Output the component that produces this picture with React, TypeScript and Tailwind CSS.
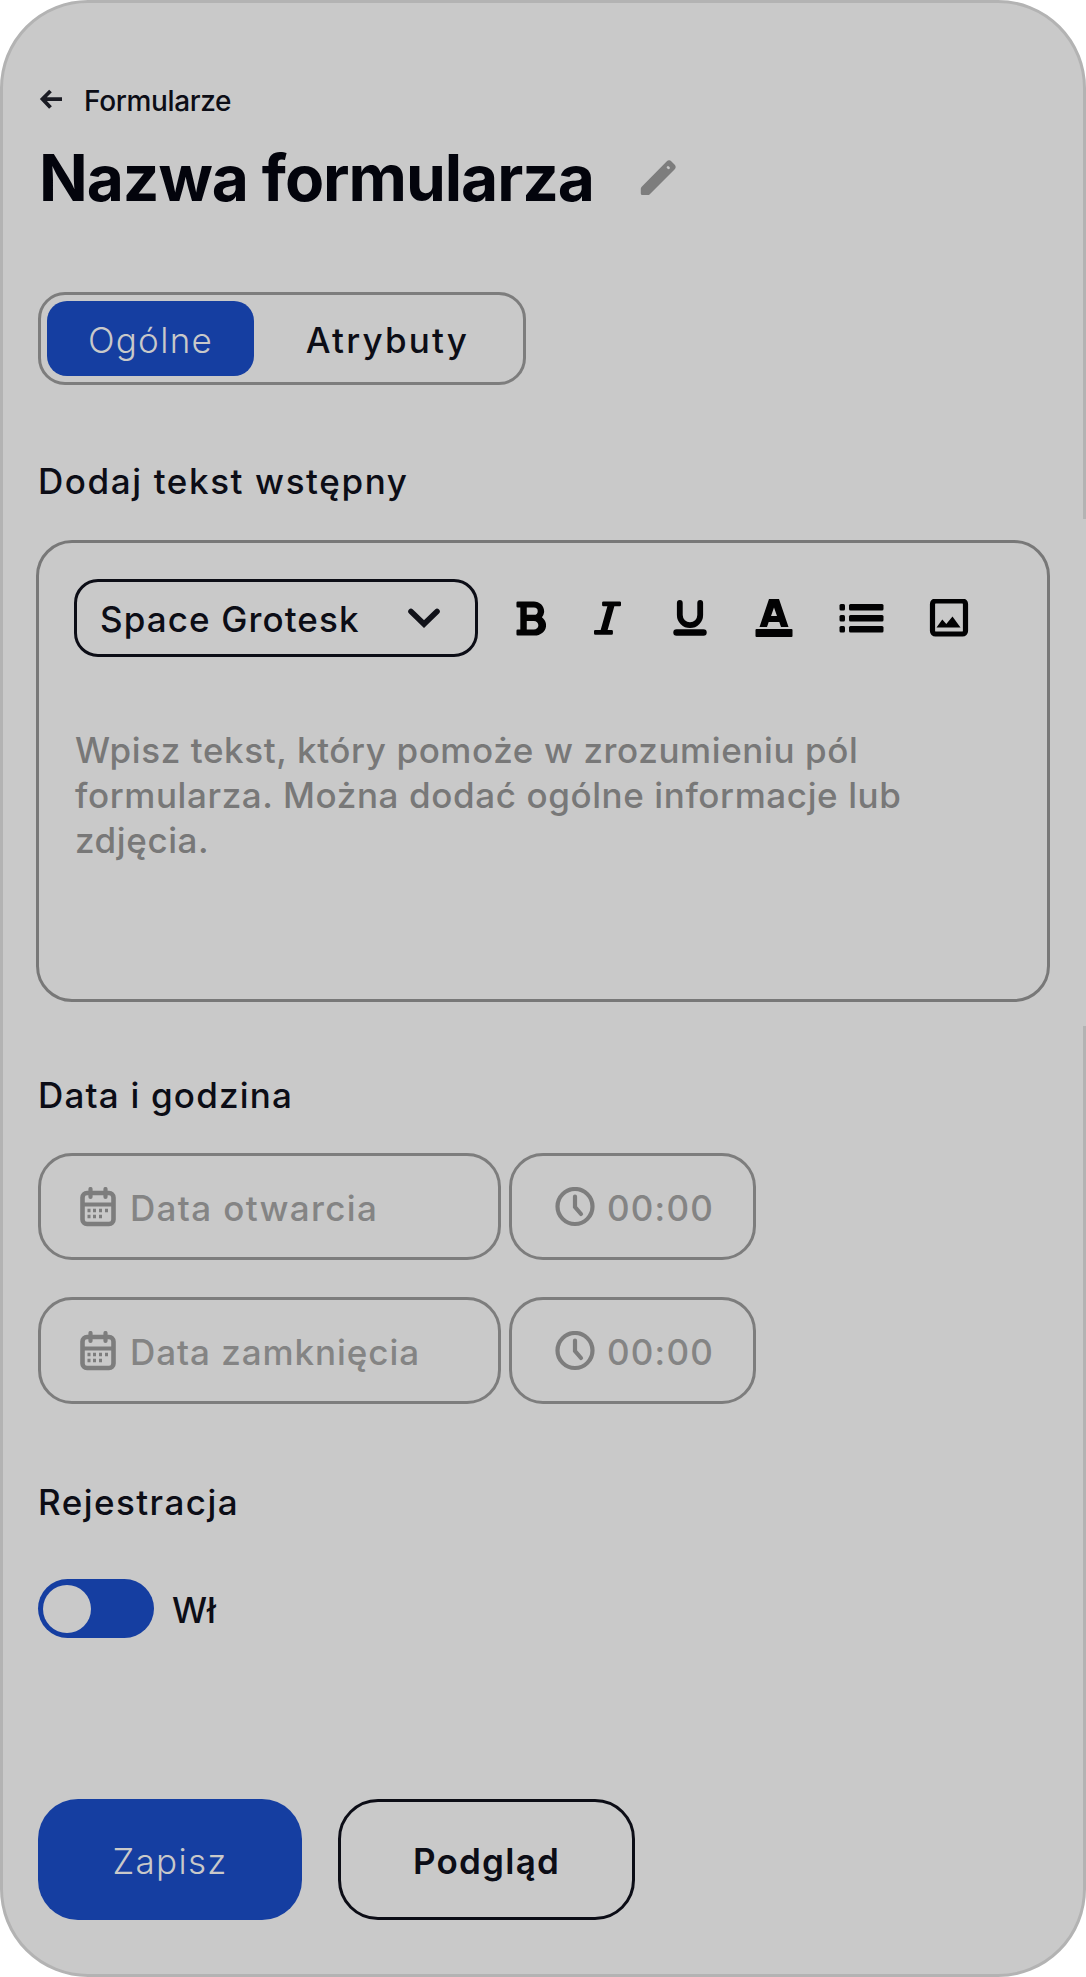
import { useState } from "react";
import type { ReactNode } from "react";
import { FaBold, FaItalic } from "react-icons/fa";

function ArrowLeft() {
  return (
    <svg className="h-[22px] w-[24px]" viewBox="0 0 24 22" fill="none" stroke="#1b1c24" strokeWidth="3.8">
      <path d="M12.500 2 4.500 10l8 8.500M4.500 10.200H24" />
    </svg>
  );
}

function Pencil() {
  return (
    <svg className="h-[38px] w-[38px]" viewBox="0 0 38 38">
      <path d="M27.6 2.4a3.500 3.500 0 0 1 4.900 0l3 3.100a3.500 3.500 0 0 1 0 4.900L10.800 35.200a3 3 0 0 1-2.100.9H3.400A1.600 1.600 0 0 1 1.800 34.500v-4.700a3 3 0 0 1 .9-2.100Z" fill="#7d7d7d" />
      <path d="m29 8.300.6.600" stroke="#c9c9c9" strokeWidth="2.600" strokeLinecap="round" />
    </svg>
  );
}

function ChevronDown() {
  return (
    <svg className="h-[20px] w-[34px]" viewBox="0 0 34 20" fill="none" stroke="#111219" strokeWidth="5.600" strokeLinecap="round">
      <path d="m4 3.500 13 12.500 13-12.500" />
    </svg>
  );
}

function Underline() {
  return (
    <svg className="h-[36px] w-[34px]" viewBox="0 0 34 36" fill="none" stroke="#020203" strokeLinecap="round">
      <path d="M6.800 3v12a10.200 10.200 0 0 0 20.400 0V3" strokeWidth="5.800" />
      <path d="M3.500 32.500h27" strokeWidth="6.400" />
    </svg>
  );
}

function TextColor() {
  return (
    <svg className="h-[40px] w-[38px]" viewBox="0 0 38 40">
      <path d="M14 1h10L33.500 29H26l-1.700-5H13.700L12 29H4.500Zm5 8.500-3 8.500h6Z" fill="#020203" fillRule="evenodd" />
      <rect x="0.500" y="31" width="37" height="8" rx="1" fill="#020203" />
    </svg>
  );
}

function BulletList() {
  return (
    <svg className="h-[30px] w-[45px]" viewBox="0 0 45 30" fill="#020203">
      {[1, 12, 23].map((y) => (
        <g key={y}>
          <rect x="0.500" y={y} width="5.500" height="6.500" rx="1.500" />
          <rect x="10" y={y} width="34.500" height="6.500" rx="1.500" />
        </g>
      ))}
    </svg>
  );
}

function Picture() {
  return (
    <svg className="h-[38px] w-[40px]" viewBox="0 0 40 38">
      <rect x="3.500" y="2" width="33" height="33" rx="3" fill="none" stroke="#020203" strokeWidth="5.200" />
      <path d="m7.500 28.500 5.800-8 4 4.500 6.200-7.500 8 11Z" fill="#020203" />
    </svg>
  );
}

function Calendar() {
  return (
    <svg className="h-[40px] w-[36px]" viewBox="0 0 36 40" fill="none" stroke="#7d7d7d">
      <rect x="2.500" y="6" width="31" height="31" rx="4.500" strokeWidth="4.600" />
      <path d="M2.500 17.500h31" strokeWidth="4" />
      <path d="M10.500 2v8M25.500 2v8" strokeWidth="4.200" strokeLinecap="round" />
      <path d="M7.500 23.500h3M13 23.500h3M19 23.500h3M25 23.500h3M7.500 29.500h3M13 29.500h3M19 29.500h3" strokeWidth="3.400" />
    </svg>
  );
}

function Clock() {
  return (
    <svg className="h-[40px] w-[40px]" viewBox="0 0 40 40" fill="none" stroke="#7d7d7d" strokeWidth="4.200">
      <circle cx="20" cy="19.500" r="17.500" />
      <path d="M20 9.500v10.500l6 7" strokeLinecap="round" />
    </svg>
  );
}

function Heading({ children, className }: { children: ReactNode; className: string }) {
  return <h2 className={"h-[44px] text-[35px] leading-[44px] font-medium whitespace-nowrap " + className}>{children}</h2>;
}

function DateRow({ label, labelClass }: { label: string; labelClass: string }) {
  return (
    <div className="flex h-[107px] gap-[8px] text-[35px] leading-[44px] font-medium text-[#848484]">
      <button className="flex w-[463px] items-center rounded-[34px] border-[3px] border-[#7d7d7d] pl-[39px]">
        <Calendar />
        <span className={"mt-[3px] ml-[14px] whitespace-nowrap " + labelClass}>{label}</span>
      </button>
      <button className="flex w-[247px] items-center rounded-[34px] border-[3px] border-[#7d7d7d] pl-[43px]">
        <Clock />
        <span className="mt-[3px] ml-[12px] tracking-[1.200px]">00:00</span>
      </button>
    </div>
  );
}

export default function App() {
  const [enabled, setEnabled] = useState(true);

  return (
    <main className="relative flex h-[1977px] w-[1086px] flex-col rounded-[88px] border-[3px] border-[#b3b3b3] bg-[#c9c9c9] pt-[79px] pl-[35px] font-['Inter',sans-serif] text-[#0c0d16]">
      <span className="absolute top-[516px] -right-[3px] h-[507px] w-[3px] bg-[#c9c9c9]" />

      <a className="flex h-[36px] items-center text-[28px] leading-[36px] font-medium">
        <ArrowLeft />
        <span className="mt-[2px] ml-[22px] tracking-[-0.350px]">Formularze</span>
      </a>

      <div className="mt-[24px] flex h-[72px] items-center">
        <h1 className="ml-[1px] w-[600px] text-[64px] leading-[72px] font-bold tracking-[-1.050px] whitespace-nowrap text-[#03040c]">Nazwa formularza</h1>
        <Pencil />
      </div>

      <div className="mt-[78px] flex h-[93px] w-[488px] rounded-[27px] border-[3px] border-[#7d7d7d] p-[6px] text-[35px]">
        <button className="h-[75px] w-[207px] rounded-[20px] bg-[#153ea1] pt-[3px] font-light tracking-[1.300px] text-[#c9c9c9]">Ogólne</button>
        <button className="flex-1 pt-[3px] pl-[4px] font-medium tracking-[2.200px]">Atrybuty</button>
      </div>

      <Heading className="mt-[74px] tracking-[1.600px]">Dodaj tekst wstępny</Heading>

      <section className="mt-[37px] -ml-[2px] h-[462px] w-[1014px] rounded-[36px] border-[3px] border-[#787878] pt-[36px] pl-[35px]">
        <div className="flex h-[78px] items-center text-[#020203]">
          <button className="flex h-[78px] w-[404px] items-center rounded-[24px] border-[3px] border-[#0c0d16] pl-[23px] text-[35px] font-medium text-[#0c0d16]">
            <span className="mt-[2px] w-[307px] text-left tracking-[1.100px]">Space Grotesk</span>
            <ChevronDown />
          </button>
          <FaBold className="ml-[37px] h-[39px] w-[31px]" preserveAspectRatio="none" />
          <FaItalic className="ml-[48px] h-[38px] w-[27px]" preserveAspectRatio="none" />
          <span className="ml-[52px]"><Underline /></span>
          <span className="ml-[48px]"><TextColor /></span>
          <span className="ml-[46px]"><BulletList /></span>
          <span className="ml-[45px]"><Picture /></span>
        </div>
        <p className="mt-[71px] w-[850px] pl-[1px] text-[35px] leading-[45px] font-[450] tracking-[0.600px] text-[#787878]">
          Wpisz tekst, który pomoże w zrozumieniu pól formularza. Można dodać ogólne informacje lub zdjęcia.
        </p>
      </section>

      <Heading className="mt-[71px] tracking-[1.200px]">Data i godzina</Heading>
      <div className="mt-[36px] flex flex-col gap-[37px]">
        <DateRow label="Data otwarcia" labelClass="tracking-[1.350px]" />
        <DateRow label="Data zamknięcia" labelClass="tracking-[0.950px]" />
      </div>

      <Heading className="mt-[76px] tracking-[1.450px]">Rejestracja</Heading>
      <div className="mt-[55px] flex h-[59px] items-center">
        <button
          role="switch"
          aria-checked={enabled}
          onClick={() => setEnabled(!enabled)}
          className="flex h-[59px] w-[116px] items-center rounded-full bg-[#153ea1] pl-[5px]"
        >
          <span className="size-[48px] rounded-full bg-[#c9c9c9]" />
        </button>
        <span className="mt-[2px] ml-[18px] text-[35px] leading-[44px] font-medium">Wł</span>
      </div>

      <div className="mt-[161px] flex h-[121px] gap-[36px] text-[35px]">
        <button className="w-[264px] rounded-[40px] bg-[#153ea1] pt-[3px] font-light tracking-[1.300px] text-[#c9c9c9]">Zapisz</button>
        <button className="w-[297px] rounded-[40px] border-[3px] border-[#0c0d16] pt-[3px] font-semibold tracking-[1.250px]">Podgląd</button>
      </div>
    </main>
  );
}
